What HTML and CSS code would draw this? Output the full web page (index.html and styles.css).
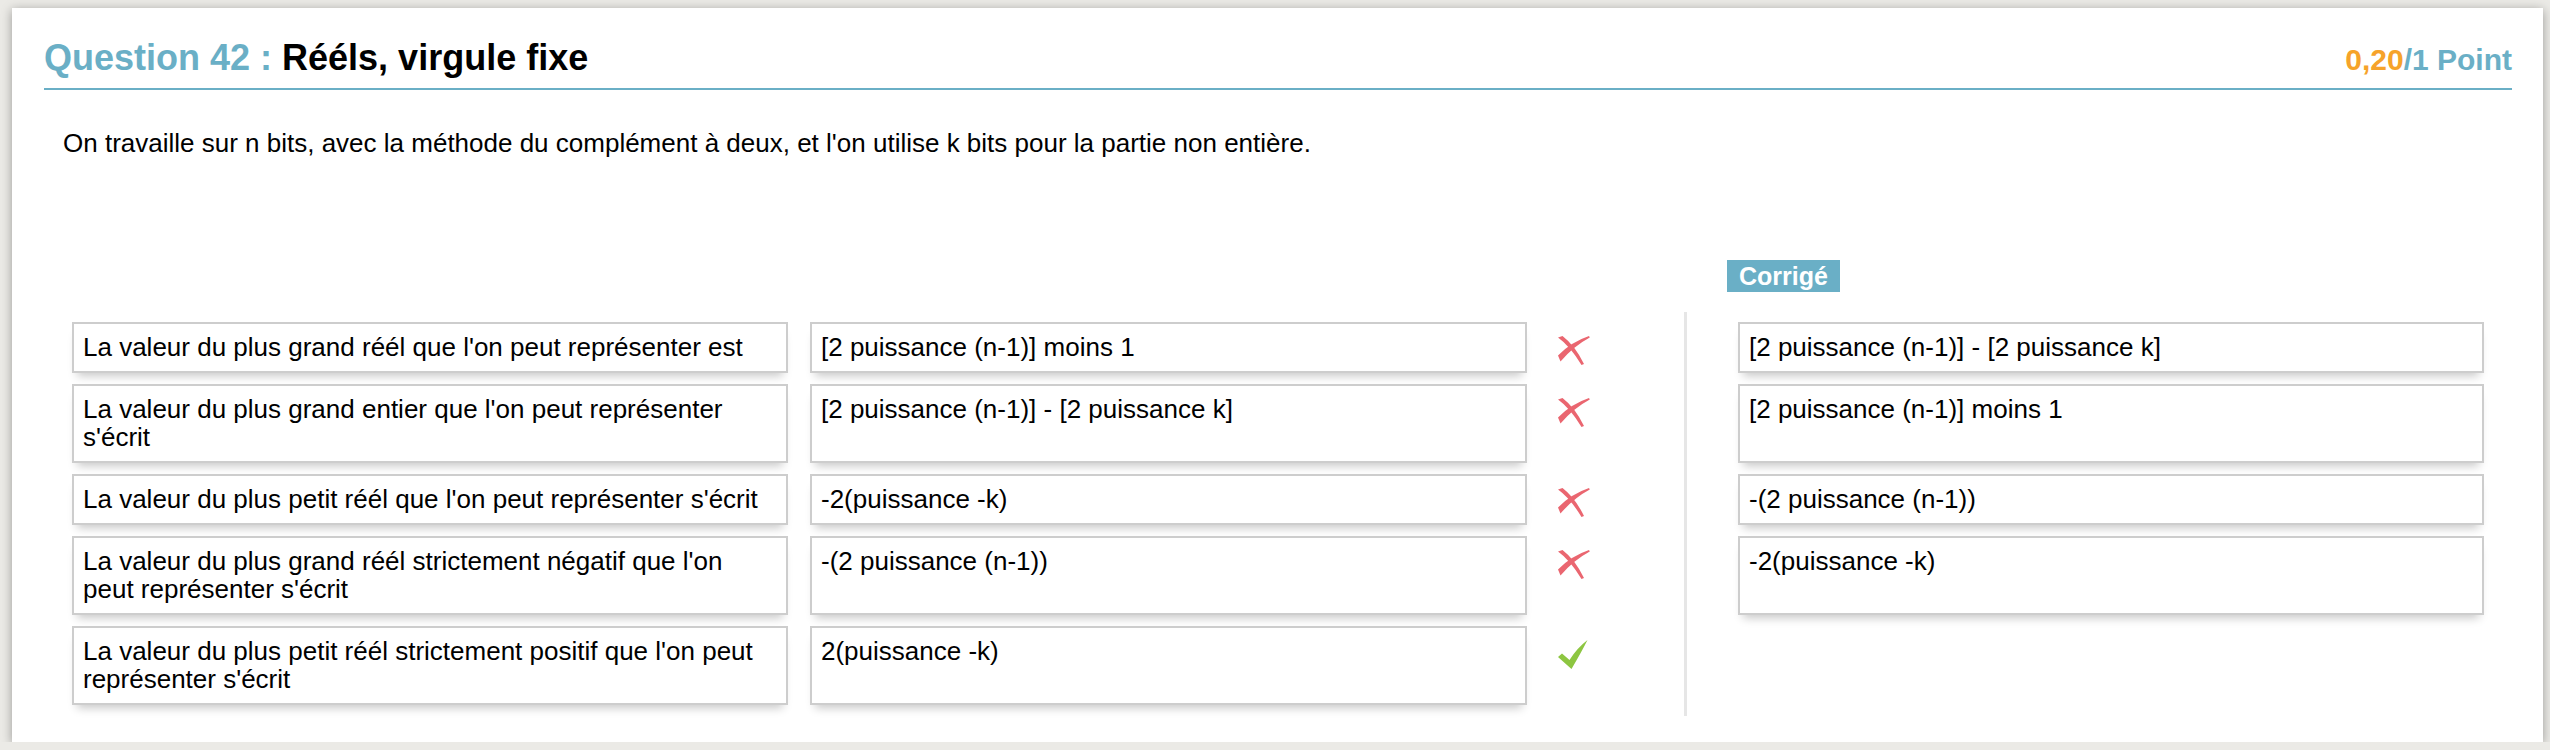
FILE: index.html
```html
<!DOCTYPE html>
<html lang="fr">
<head>
<meta charset="utf-8">
<title>Question 42</title>
<link rel="stylesheet" href="styles.css">
</head>
<body>
<div class="card">
  <div class="head">
    <h1 class="title"><span class="num">Question 42 : </span>Rééls, virgule fixe</h1>
    <div class="score"><span class="got">0,20</span>/1 Point</div>
  </div>
  <p class="intro">On travaille sur n bits, avec la méthode du complément à deux, et l'on utilise k bits pour la partie non entière.</p>

  <div class="results-head">
    <span class="badge">Corrigé</span>
  </div>

  <div class="results">
    <div class="sep"></div>

    <div class="box q">La valeur du plus grand réél que l'on peut représenter est</div>
    <div class="box ans">[2 puissance (n-1)] moins 1</div>
    <div class="mark"><svg class="x" width="32" height="30" viewBox="0 0 32 30"><path d="M0 1.5 Q12 10 23.5 29 L26 28 Q17 9.5 4.5 0 Z"/><path d="M0 19.5 Q13 6 31 0 L31.8 1.6 Q16 10 2.5 25.5 Z"/></svg></div>
    <div class="box fix">[2 puissance (n-1)] - [2 puissance k]</div>

    <div class="box q">La valeur du plus grand entier que l'on peut représenter s'écrit</div>
    <div class="box ans">[2 puissance (n-1)] - [2 puissance k]</div>
    <div class="mark"><svg class="x" width="32" height="30" viewBox="0 0 32 30"><path d="M0 1.5 Q12 10 23.5 29 L26 28 Q17 9.5 4.5 0 Z"/><path d="M0 19.5 Q13 6 31 0 L31.8 1.6 Q16 10 2.5 25.5 Z"/></svg></div>
    <div class="box fix">[2 puissance (n-1)] moins 1</div>

    <div class="box q">La valeur du plus petit réél que l'on peut représenter s'écrit</div>
    <div class="box ans">-2(puissance -k)</div>
    <div class="mark"><svg class="x" width="32" height="30" viewBox="0 0 32 30"><path d="M0 1.5 Q12 10 23.5 29 L26 28 Q17 9.5 4.5 0 Z"/><path d="M0 19.5 Q13 6 31 0 L31.8 1.6 Q16 10 2.5 25.5 Z"/></svg></div>
    <div class="box fix">-(2 puissance (n-1))</div>

    <div class="box q">La valeur du plus grand réél strictement négatif que l'on peut représenter s'écrit</div>
    <div class="box ans">-(2 puissance (n-1))</div>
    <div class="mark"><svg class="x" width="32" height="30" viewBox="0 0 32 30"><path d="M0 1.5 Q12 10 23.5 29 L26 28 Q17 9.5 4.5 0 Z"/><path d="M0 19.5 Q13 6 31 0 L31.8 1.6 Q16 10 2.5 25.5 Z"/></svg></div>
    <div class="box fix">-2(puissance -k)</div>

    <div class="box q">La valeur du plus petit réél strictement positif que l'on peut représenter s'écrit</div>
    <div class="box ans">2(puissance -k)</div>
    <div class="mark"><svg class="ok" width="30" height="29" viewBox="0 0 30 29"><path d="M0 17 L4 13.5 L11.5 20 Q19 8 29.5 0 Q24 11 13.5 29 Z"/></svg></div>
  </div>
</div>
</body>
</html>
```

FILE: styles.css
```css
body {
  margin: 0;
  background: #ebeae6;
  font-family: "Liberation Sans", Arial, sans-serif;
  color: #000;
}

.card {
  background: #fff;
  margin: 8px 7px 0 12px;
  padding: 30px 31px 37px 32px;
  box-shadow: 0 2px 10px rgba(0, 0, 0, 0.35);
}

.head {
  display: flex;
  justify-content: space-between;
  align-items: baseline;
  padding-bottom: 10px;
  border-bottom: 2px solid #6aafc6;
}

.title {
  margin: 0;
  font-size: 36px;
  line-height: 40px;
  font-weight: bold;
  color: #000;
}

.title .num {
  color: #6aafc6;
}

.score {
  font-size: 30px;
  font-weight: bold;
  color: #6aafc6;
}

.score .got {
  color: #f6a32a;
}

.intro {
  margin: 38px 0 0 19px;
  font-size: 26px;
  line-height: 30px;
}

.results-head,
.results {
  display: grid;
  grid-template-columns: 716px 739px 157px 3px 797px;
  margin-left: 28px;
}

.results-head {
  margin-top: 102px;
  margin-bottom: 30px;
}

.badge {
  grid-column: 5;
  justify-self: start;
  margin-left: 40px;
  background: #6aafc6;
  color: #fff;
  font-weight: bold;
  font-size: 25px;
  line-height: 32px;
  padding: 0 12px;
}

.results {
  row-gap: 11px;
  font-size: 26px;
  line-height: 28px;
}

.sep {
  grid-column: 4;
  grid-row: 1 / span 5;
  margin: -10px 0 -11px;
  background: #e6e6e6;
}

.box {
  background: #fff;
  border: 2px solid #cdcdcd;
  padding: 9px 9px 10px;
  box-shadow: 0 8px 9px -5px rgba(0, 0, 0, 0.22);
}

.q {
  grid-column: 1;
}

.ans {
  grid-column: 2;
  margin-left: 22px;
}

.mark {
  grid-column: 3;
  padding: 14px 0 0 31px;
}

.fix {
  grid-column: 5;
  margin-left: 51px;
}

.x path {
  fill: #ea6670;
}

.ok path {
  fill: #8dc641;
}
```
